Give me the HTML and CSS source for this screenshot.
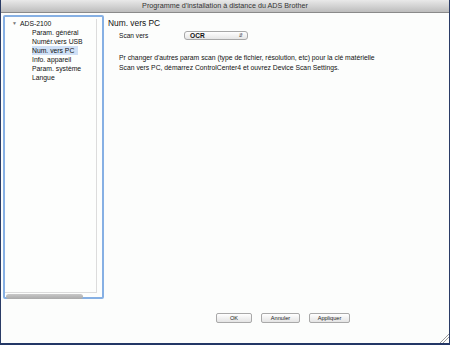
FILE: index.html
```html
<!DOCTYPE html>
<html lang="fr">
<head>
    <meta charset="UTF-8">
    <title>Programme d'installation à distance du ADS Brother</title>
    <link rel="stylesheet" href="styles.css">
</head>
<body>
    <div class="window">
        <div class="titlebar">Programme d’installation à distance du ADS Brother</div>
        <div class="main">
            <div class="sidebar">
                <div class="tree">
                    <div class="node root"><span class="arrow">&#9660;</span>ADS-2100</div>
                    <div class="node">Param. général</div>
                    <div class="node">Numér.vers USB</div>
                    <div class="node selected">Num. vers PC</div>
                    <div class="node">Info. appareil</div>
                    <div class="node">Param. système</div>
                    <div class="node">Langue</div>
                </div>
                <div class="hscroll"><div class="thumb"></div></div>
            </div>
            <div class="pane">
                <h2>Num. vers PC</h2>
                <div class="row">
                    <span class="label">Scan vers</span>
                    <div class="popup">OCR<span class="updown">&#8693;</span></div>
                </div>
                <p class="note">Pr changer d'autres param scan (type de fichier, résolution, etc) pour la clé matérielle<br>Scan vers PC, démarrez ControlCenter4 et ouvrez Device Scan Settings.</p>
                <div class="buttons">
                    <button class="btn ok">OK</button>
                    <button class="btn">Annuler</button>
                    <button class="btn">Appliquer</button>
                </div>
            </div>
        </div>
        <div class="grip"></div>
    </div>
</body>
</html>
```

FILE: styles.css
```css
* { box-sizing: border-box; }
body { margin: 0; background: #fcfdfc; font-family: 'Liberation Sans', 'DejaVu Sans', sans-serif; color: #111; }
.window { width: 450px; height: 345px; display: flex; flex-direction: column; background: #fcfdfc; border-left: 1px solid #2a3c66; border-right: 1px solid #2a3c66; border-bottom: 2px solid #233766; position: relative; }
.titlebar { height: 13px; line-height: 12px; font-size: 7.2px; text-align: center; color: #333; background: linear-gradient(#e9e9e9, #bdbdbd); border-bottom: 1px solid #8a8a8a; }
.main { flex: 1; display: flex; padding: 2px 2px 0 2px; }
.sidebar { width: 101px; height: 284px; border: 2px solid #86b0e4; border-radius: 2px; background: #fdfefd; position: relative; padding: 2px 0 0 0; }
.tree { font-size: 6.8px; line-height: 9px; height: 274px; width: 92px; border-right: 1px solid #dcdcdc; border-bottom: 1px solid #dcdcdc; }
.node { padding-left: 27px; }
.node.root { padding-left: 4px; }
.arrow { display: inline-block; width: 11px; font-size: 5px; color: #777; text-align: center; vertical-align: 1px; }
.selected { background: linear-gradient(to right, transparent 27px, #cfe0f6 27px, #cfe0f6 73px, transparent 73px); }
.hscroll { height: 6px; margin: 1px 0 0 1px; width: 90px; }
.thumb { height: 5px; width: 77px; border-radius: 3px; background: linear-gradient(#c9c9c9, #a9a9a9); }
.pane { flex: 1; display: flex; flex-direction: column; padding: 3px 0 0 4px; }
h2 { margin: 0; font-size: 8.4px; font-weight: normal; line-height: 11px; }
.row { display: flex; align-items: center; margin-top: 2px; padding-left: 11px; font-size: 6.6px; }
.label { width: 65px; }
.popup { width: 64px; height: 9px; border: 1px solid #a8a8a8; border-radius: 3px; background: linear-gradient(#fefefe, #e6e6e6); font-size: 6.6px; line-height: 7px; padding-left: 5px; display: flex; justify-content: space-between; font-weight: bold; }
.updown { font-size: 5px; font-weight: normal; padding-right: 4px; color: #444; }
.note { margin: 13px 0 0 11px; font-size: 6.8px; line-height: 10px; }
.buttons { margin-top: auto; margin-bottom: 20px; display: flex; gap: 9px; padding-left: 108px; }
.btn { height: 10px; font-family: inherit; font-size: 5.6px; padding: 0; border: 1px solid #a9a9a9; border-radius: 2px; background: linear-gradient(#ffffff, #e4e4e4); color: #222; line-height: 8px; width: 36px; }
.btn + .btn { width: 39px; }
.btn:last-child { width: 41px; }
.grip { position: absolute; right: 0; bottom: 0; width: 11px; height: 11px; background: linear-gradient(135deg, transparent 55%, #999 55%, #999 60%, transparent 60%, transparent 72%, #999 72%, #999 77%, transparent 77%); }
```
